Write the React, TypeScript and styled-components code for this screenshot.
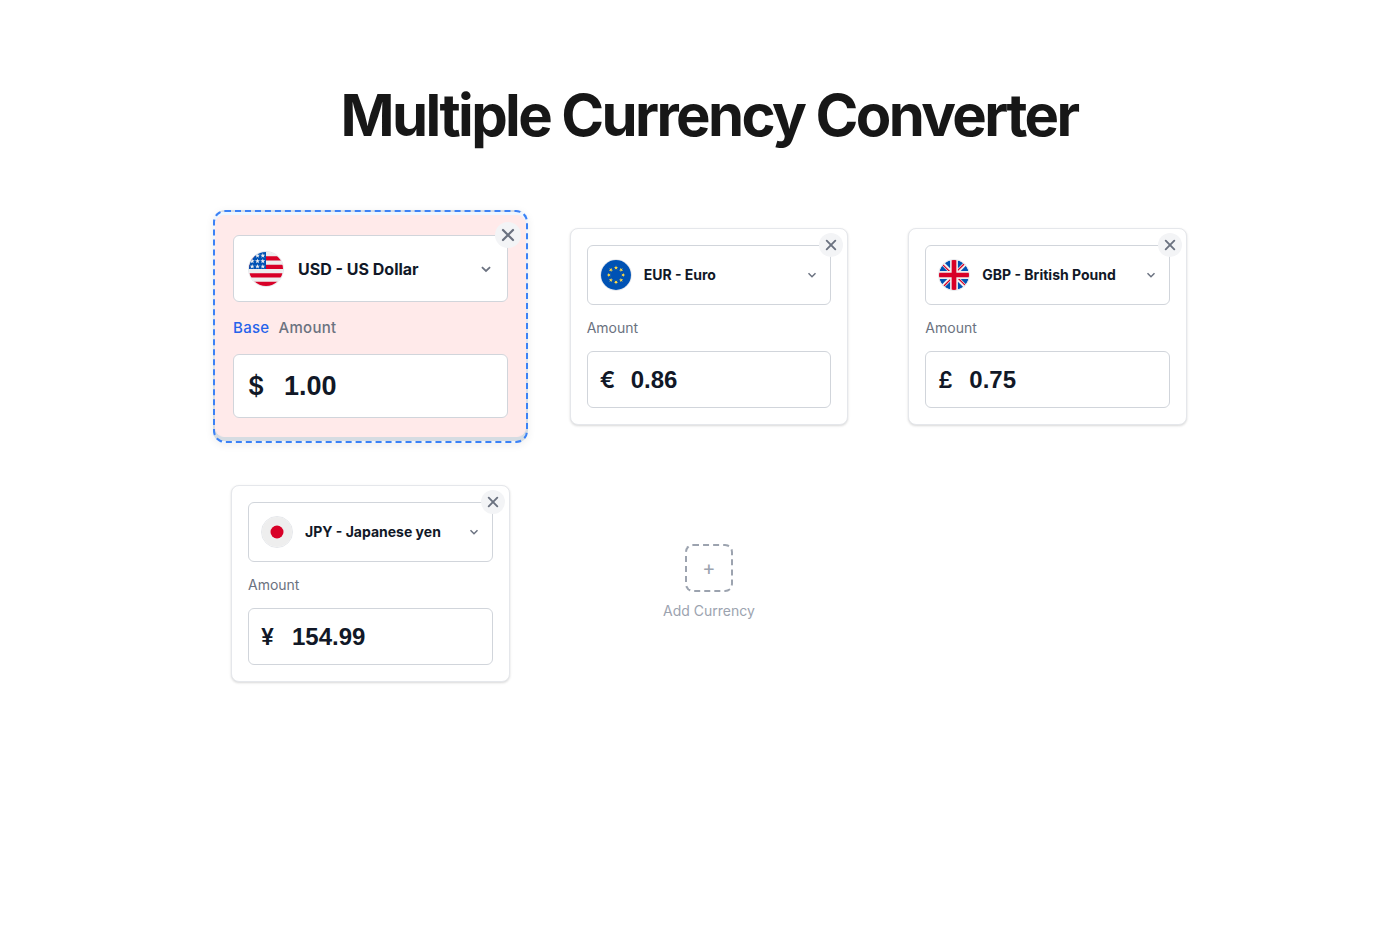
import React, { useId, useState } from 'react';
import styled, { createGlobalStyle, css } from 'styled-components';

const GlobalStyle = createGlobalStyle`
  *, *::before, *::after { box-sizing: border-box; }
  body {
    margin: 0;
    background: #ffffff;
    color: #111827;
    font-family: Inter, "Liberation Sans", sans-serif;
    -webkit-font-smoothing: antialiased;
  }
  button, input, select { font-family: inherit; color: inherit; }
`;

const Page = styled.main`
  padding: 79px 24px 48px 49px;
`;

const Title = styled.h1`
  margin: 0 0 77px;
  font-size: 58px;
  line-height: 72px;
  font-weight: 700;
  letter-spacing: -0.045em;
  text-align: center;
  color: #171717;
`;

const Grid = styled.section`
  display: grid;
  grid-template-columns: repeat(3, minmax(0, 1fr));
  gap: 60px;
  max-width: 956px;
  margin: 0 auto;

  @media (max-width: 900px) {
    grid-template-columns: minmax(0, 1fr);
  }
`;

const BaseFrame = styled.div`
  margin: -18px;
  padding: 3px 0 4px;
  border: 2px dashed #3b82f6;
  border-radius: 12px;
  background: linear-gradient(#eff6ff 0 10%, #d6dce2 95%);
  box-shadow: 0 2px 8px rgba(0, 0, 0, 0.07);
`;

type Sized = { $base?: boolean };

const Card = styled.article<Sized>`
  position: relative;
  padding: 16px;
  border: 1px solid #e5e7eb;
  border-radius: 8px;
  background: #ffffff;
  box-shadow: 0 1px 3px rgba(0, 0, 0, 0.1), 0 1px 2px rgba(0, 0, 0, 0.06);
  ${(p) =>
    p.$base &&
    css`
      padding: 19px 17px 18px;
      border-color: #ffeaea;
      border-radius: 9px;
      background: #ffeaea;
      box-shadow: none;
    `}
`;

const CloseButton = styled.button<Sized>`
  position: absolute;
  top: ${(p) => (p.$base ? 6 : 4)}px;
  right: 4px;
  display: grid;
  place-items: center;
  width: ${(p) => (p.$base ? 26 : 24)}px;
  height: ${(p) => (p.$base ? 26 : 24)}px;
  padding: 0;
  border: 0;
  border-radius: 50%;
  background: #f3f4f6;
  color: #6b7280;
  cursor: pointer;
`;

const Picker = styled.div<Sized>`
  display: flex;
  align-items: center;
  gap: ${(p) => (p.$base ? 14 : 12)}px;
  height: ${(p) => (p.$base ? 67 : 60)}px;
  padding: 0 ${(p) => (p.$base ? 14 : 12)}px;
  border: 1px solid #d1d5db;
  border-radius: 6px;
  background: #ffffff;
`;

const Flag = styled.svg<Sized>`
  flex: none;
  width: ${(p) => (p.$base ? 36 : 32)}px;
  height: ${(p) => (p.$base ? 36 : 32)}px;
  border: 1px solid #e5e7eb;
  border-radius: 50%;
`;

const Select = styled.select<Sized>`
  flex: 1;
  min-width: 0;
  padding: 0;
  border: 0;
  background: transparent;
  appearance: none;
  font-size: ${(p) => (p.$base ? 16 : 14)}px;
  line-height: 20px;
  font-weight: 700;
  color: #111827;
`;

const Caption = styled.label<Sized>`
  display: flex;
  gap: 9px;
  margin: ${(p) => (p.$base ? 15 : 13)}px 0;
  font-size: ${(p) => (p.$base ? 15 : 14)}px;
  line-height: ${(p) => (p.$base ? 22 : 20)}px;
  font-weight: ${(p) => (p.$base ? 500 : 400)};
  letter-spacing: ${(p) => (p.$base ? '0.02em' : 'normal')};
  color: #6b7280;
`;

const BaseTag = styled.span`
  color: #2563eb;
`;

const AmountBox = styled.div<Sized>`
  display: flex;
  align-items: center;
  gap: ${(p) => (p.$base ? 19 : 16)}px;
  height: ${(p) => (p.$base ? 64 : 57)}px;
  padding: 0 ${(p) => (p.$base ? 14 : 12)}px;
  border: 1px solid #d1d5db;
  border-radius: 6px;
  background: #ffffff;
  font-family: "Liberation Sans", Arial, sans-serif;
  font-size: ${(p) => (p.$base ? 27 : 24)}px;
  font-weight: 700;
  color: #111827;
`;

const Symbol = styled.span<Sized>`
  width: ${(p) => (p.$base ? 17 : 15)}px;
  font-family: Inter, sans-serif;
  font-size: ${(p) => (p.$base ? 25 : 23)}px;
  font-weight: 600;
`;

const AmountInput = styled.input`
  flex: 1;
  min-width: 0;
  padding: 0;
  border: 0;
  outline: 0;
  background: transparent;
  font: inherit;
`;

const AddCell = styled.div`
  display: flex;
  align-items: center;
  justify-content: center;
  padding-bottom: 3px;
`;

const AddButton = styled.button`
  display: flex;
  flex-direction: column;
  align-items: center;
  gap: 9px;
  padding: 0;
  border: 0;
  background: transparent;
  font-size: 14px;
  line-height: 20px;
  color: #9ca3af;
  cursor: pointer;
`;

const AddBox = styled.span`
  display: grid;
  place-items: center;
  width: 48px;
  height: 48px;
  border: 2px dashed #9ca3af;
  border-radius: 8px;
  font-size: 20px;
`;

const STAR = 'M0-10 2.4-3.2 9.5-3.1 3.8 1.2 5.9 8.1 0 4-5.9 8.1-3.8 1.2-9.5-3.1-2.4-3.2z';

function UsFlag() {
  const rows = [55, 137, 218];
  const cols = [48, 128, 208];
  return (
    <>
      <path fill="#eee" d="M0 0h512v512H0z" />
      <path fill="#d80027" d="M0 64h512v64H0zM0 192h512v64H0zM0 320h512v64H0zM0 448h512v64H0z" />
      <path fill="#0052b4" d="M0 0h256v256H0z" />
      {rows.map((y) =>
        cols.map((x) => (
          <path key={`${x}-${y}`} fill="#eee" d={STAR} transform={`translate(${x} ${y}) scale(3.9)`} />
        )),
      )}
    </>
  );
}

function EuFlag() {
  const angles = [0, 45, 90, 135, 180, 225, 270, 315];
  return (
    <>
      <path fill="#0052b4" d="M0 0h512v512H0z" />
      {angles.map((a) => (
        <path key={a} fill="#ffda44" d={STAR} transform={`rotate(${a} 256 256) translate(256 133) scale(3.8)`} />
      ))}
    </>
  );
}

function GbFlag() {
  return (
    <>
      <path fill="#eee" d="M0 0h512v512H0z" />
      <path
        fill="#0052b4"
        d="M53 100C33 126 18 156 9 189h133zM503 189c-9-33-24-63-44-89l-89 89zM9 323c9 33 24 63 44 89l89-89zM412 53C386 33 356 18 323 9v133zM100 459c26 20 56 35 89 44V370zM189 9c-33 9-63 24-89 44l89 89zM323 503c33-9 63-24 89-44l-89-89zM370 323l89 89c20-26 35-56 44-89z"
      />
      <path fill="#d80027" d="M216 0h80v216h216v80H296v216h-80V296H0v-80h216z" />
      <path
        fill="#d80027"
        d="M323 323l114 114c5-5 10-11 15-16l-98-98zM189 323L75 437l16 15 98-98zM189 189L75 75 60 91l98 98zM323 189L437 75l-16-15-98 98z"
      />
    </>
  );
}

function JpFlag() {
  return (
    <>
      <path fill="#eee" d="M0 0h512v512H0z" />
      <circle cx="256" cy="256" r="111" fill="#d80027" />
    </>
  );
}

type Currency = {
  code: string;
  name: string;
  symbol: string;
  amount: string;
  flag: () => React.ReactElement;
};

const CURRENCIES: Currency[] = [
  { code: 'USD', name: 'US Dollar', symbol: '$', amount: '1.00', flag: UsFlag },
  { code: 'EUR', name: 'Euro', symbol: '€', amount: '0.86', flag: EuFlag },
  { code: 'GBP', name: 'British Pound', symbol: '£', amount: '0.75', flag: GbFlag },
  { code: 'JPY', name: 'Japanese yen', symbol: '¥', amount: '154.99', flag: JpFlag },
];

function CurrencyCard({ currency, base }: { currency: Currency; base?: boolean }) {
  const id = useId();
  const [amount, setAmount] = useState(currency.amount);
  const Drawing = currency.flag;
  const iconSize = base ? 14 : 12;
  return (
    <Card $base={base}>
      <Picker $base={base}>
        <Flag $base={base} viewBox="0 0 512 512" aria-hidden="true">
          <Drawing />
        </Flag>
        <Select $base={base} aria-label="Currency" defaultValue={currency.code}>
          <option value={currency.code}>
            {currency.code} - {currency.name}
          </option>
        </Select>
        <svg width={iconSize} height={iconSize} viewBox="0 0 12 12" fill="none" stroke="#6b7280" strokeWidth="1.5" aria-hidden="true">
          <path d="M2.5 4.3 6 7.7l3.5-3.4" />
        </svg>
      </Picker>
      <Caption $base={base} htmlFor={id}>
        {base && <BaseTag>Base</BaseTag>}
        <span>Amount</span>
      </Caption>
      <AmountBox $base={base}>
        <Symbol $base={base}>{currency.symbol}</Symbol>
        <AmountInput id={id} value={amount} onChange={(e) => setAmount(e.target.value)} />
      </AmountBox>
      <CloseButton $base={base} type="button" aria-label={`Remove ${currency.code}`}>
        <svg width={iconSize} height={iconSize} viewBox="0 0 12 12" fill="none" stroke="currentColor" strokeWidth="1.9" strokeLinecap="round" aria-hidden="true">
          <path d="M1.7 1.7l8.6 8.6M10.3 1.7l-8.6 8.6" />
        </svg>
      </CloseButton>
    </Card>
  );
}

export default function App() {
  const [first, ...others] = CURRENCIES;
  return (
    <>
      <GlobalStyle />
      <Page>
        <Title>Multiple Currency Converter</Title>
        <Grid>
          <BaseFrame>
            <CurrencyCard currency={first} base />
          </BaseFrame>
          {others.map((c) => (
            <CurrencyCard key={c.code} currency={c} />
          ))}
          <AddCell>
            <AddButton type="button">
              <AddBox>+</AddBox>
              <span>Add Currency</span>
            </AddButton>
          </AddCell>
        </Grid>
      </Page>
    </>
  );
}
